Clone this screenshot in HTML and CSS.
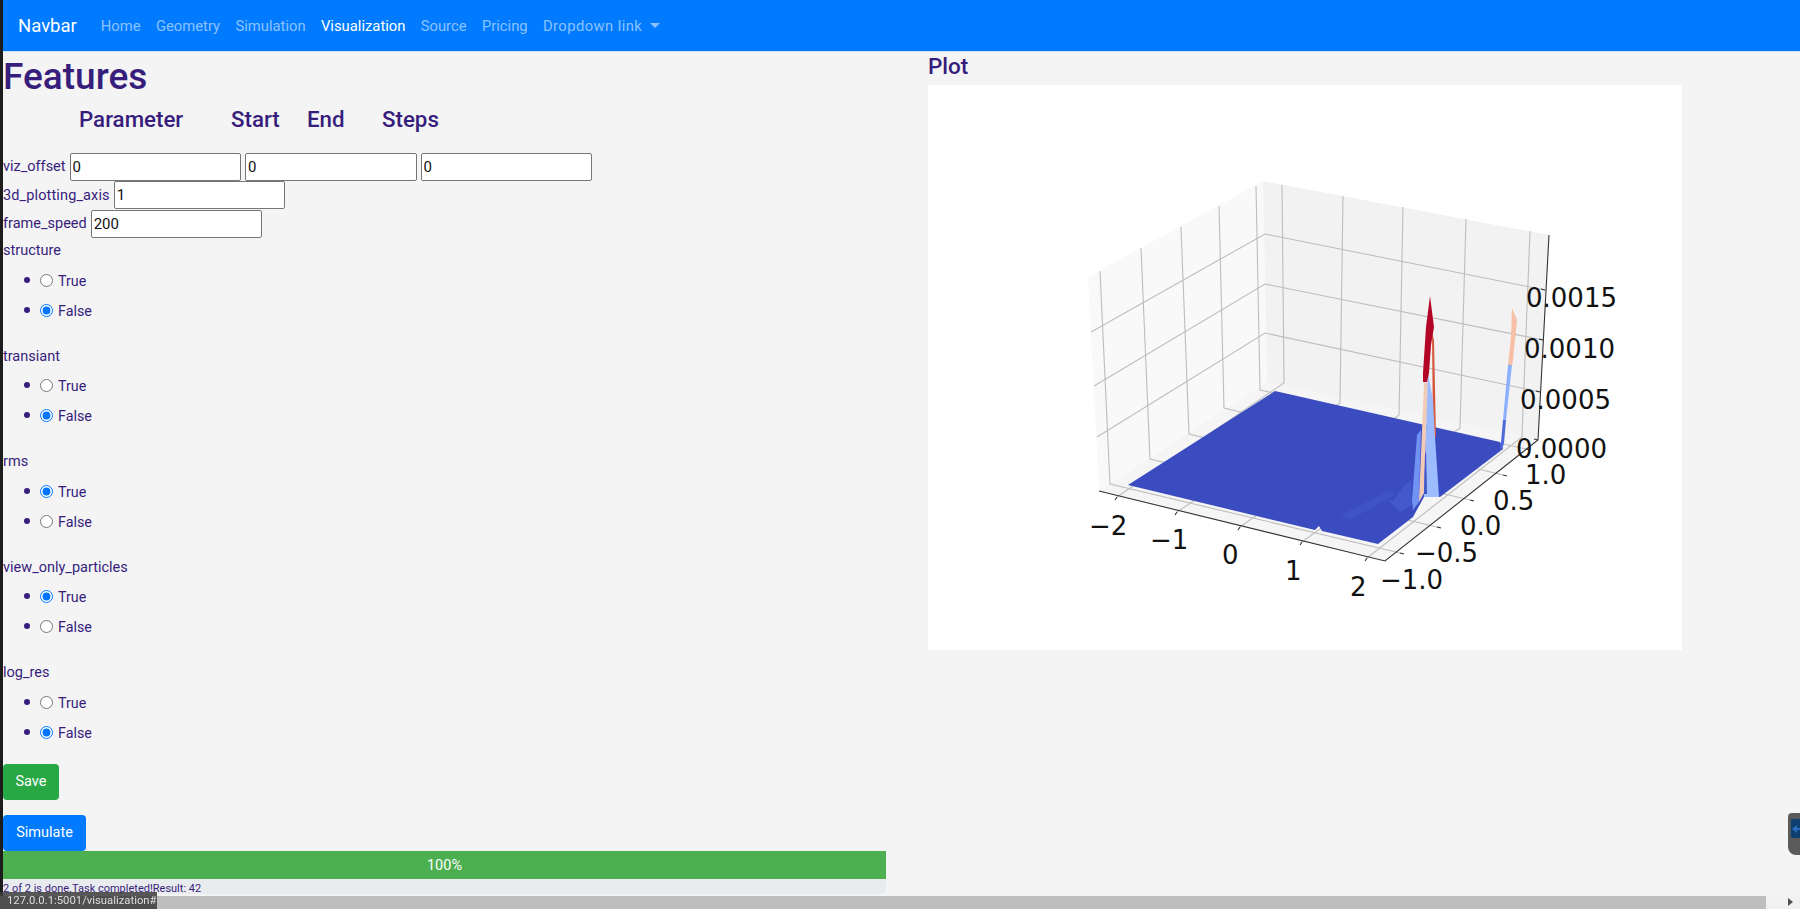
FILE: index.html
```html
<!DOCTYPE html>
<html lang="en">
<head>
  <meta charset="UTF-8" />
  <title>Visualization</title>
  <link rel="stylesheet" href="styles.css">
</head>
<body>
  <nav class="navbar">
    <a class="brand" href="#">Navbar</a>
    <a class="nav-link" href="#">Home</a>
    <a class="nav-link" href="#">Geometry</a>
    <a class="nav-link" href="#">Simulation</a>
    <a class="nav-link active" href="#">Visualization</a>
    <a class="nav-link" href="#">Source</a>
    <a class="nav-link" href="#">Pricing</a>
    <a class="nav-link nav-drop" href="#">Dropdown link <span class="caret"></span></a>
  </nav>

  <main class="content">
    <section class="features">
      <h1>Features</h1>
      <div class="heads">
        <h4 class="head-param">Parameter</h4>
        <h4 class="head-start">Start</h4>
        <h4 class="head-end">End</h4>
        <h4>Steps</h4>
      </div>

      <div class="field first"><label>viz_offset</label><input value="0"><input value="0"><input value="0"></div>
      <div class="field axis"><label>3d_plotting_axis</label><input value="1"></div>
      <div class="field"><label>frame_speed</label><input value="200"></div>

      <div class="group">
        <p>structure</p>
        <ul>
          <li><input type="radio" name="structure"><span>True</span></li>
          <li><input type="radio" name="structure" checked><span>False</span></li>
        </ul>
      </div>
      <div class="group">
        <p>transiant</p>
        <ul>
          <li><input type="radio" name="transiant"><span>True</span></li>
          <li><input type="radio" name="transiant" checked><span>False</span></li>
        </ul>
      </div>
      <div class="group">
        <p>rms</p>
        <ul>
          <li><input type="radio" name="rms" checked><span>True</span></li>
          <li><input type="radio" name="rms"><span>False</span></li>
        </ul>
      </div>
      <div class="group">
        <p>view_only_particles</p>
        <ul>
          <li><input type="radio" name="vop" checked><span>True</span></li>
          <li><input type="radio" name="vop"><span>False</span></li>
        </ul>
      </div>
      <div class="group">
        <p>log_res</p>
        <ul>
          <li><input type="radio" name="log_res"><span>True</span></li>
          <li><input type="radio" name="log_res" checked><span>False</span></li>
        </ul>
      </div>

      <button class="btn btn-save">Save</button>
      <button class="btn btn-sim">Simulate</button>
      <div class="progress">100%</div>
      <div class="status">2 of 2 is done.Task completed!Result: 42</div>
    </section>

    <section class="plot">
      <h4>Plot</h4>
      <div class="plot-box">
        <svg class="plot-svg" viewBox="928 85 754 565" width="754" height="565">
          <!-- panes -->
          <polygon points="1088,277 1263,181 1267,382 1099,491" fill="#f9f9f9"/>
          <polygon points="1263,181 1549,235 1538,440 1267,382" fill="#f2f2f2"/>
          <polygon points="1099,491 1267,382 1538,440 1385,561" fill="#f5f5f5"/>

          <!-- grid -->
          <g fill="none" stroke="#bdbdbd" stroke-width="1.1">
            <polyline points="1100,271 1110,484 1400,553"/>
            <polyline points="1141,248 1150,459 1437,527"/>
            <polyline points="1181,227 1189,434 1470,500"/>
            <polyline points="1219,206 1224,408 1503,475"/>
            <polyline points="1256,186 1260,390 1526,449"/>
            <polyline points="1282,185 1284,383 1117,497"/>
            <polyline points="1343,196 1340,403 1177,512"/>
            <polyline points="1403,207 1399,415 1240,527"/>
            <polyline points="1466,219 1460,428 1302,542"/>
            <polyline points="1530,231 1522,437 1367,558"/>
            <polyline points="1091,332 1265,234 1545,290"/>
            <polyline points="1094,386 1265,284 1543,340"/>
            <polyline points="1097,437 1265,333 1540,392"/>
          </g>

          <!-- surface -->
          <polygon points="1275,391 1500,442 1503,449 1440,497 1424,497 1413,517 1378,544 1322,531 1319,526 1315,530 1128,485" fill="#3a4cc0"/>
          <polygon points="1393,501 1403,487 1411,480 1412,505 1400,512 1388,500" fill="#4358cb"/>
          <polygon points="1340,515 1390,490 1395,495 1350,520" fill="#3f52c6"/>

          <!-- right peak -->
          <polygon points="1512,308 1517,320 1513,360 1512,365 1508,365 1511,337" fill="#f6bfa6"/>
          <polygon points="1508,365 1512,365 1506,420 1503,420" fill="#8db0fe"/>
          <polygon points="1503,420 1506,420 1504,443 1502,450 1500,448 1501,442" fill="#4f69d9"/>

          <!-- main peak -->
          <polygon points="1417,435 1421,430 1419,502 1413,510 1412,500" fill="#6f92f3"/>
          <polygon points="1424,383 1428,382 1424,493 1419,502" fill="#f2cbb7"/>
          <polygon points="1432,333 1434,340 1436,437 1433,437" fill="#d6553f"/>
          <polygon points="1428,373 1433,400 1435,437 1439,497 1424,497" fill="#9dbcff"/>
          <polygon points="1425,454 1426,452 1427,494 1424,494" fill="#3f53c5"/>
          <polygon points="1430,296 1434,327 1431,345 1429,373 1427,382 1423,382 1423,373 1426,327" fill="#b40426"/>

          <!-- axes -->
          <g fill="none" stroke="#333" stroke-width="1.1">
            <polyline points="1099,491 1385,561 1538,440 1549,235"/>
            <path d="M1117,497l-2,3M1177,512l-2,3M1240,527l-2,3M1302,542l-2,3M1367,558l-2,3"/>
            <path d="M1400,553l4,1M1437,527l4,1M1470,500l4,1M1503,475l4,1M1526,449l4,1"/>
            <path d="M1545,290l-4,-1M1543,340l-4,-1M1540,392l-4,-1M1538,440l-4,-1"/>
          </g>

          <!-- tick labels -->
          <g class="ticks">
            <text x="1526" y="307">0.0015</text>
            <text x="1524" y="358">0.0010</text>
            <text x="1520" y="409">0.0005</text>
            <text x="1516" y="458">0.0000</text>
            <text x="1525" y="484">1.0</text>
            <text x="1493" y="510">0.5</text>
            <text x="1460" y="535">0.0</text>
            <text x="1415" y="562">−0.5</text>
            <text x="1380" y="589">−1.0</text>
            <text x="1350" y="596">2</text>
            <text x="1285" y="580">1</text>
            <text x="1222" y="564">0</text>
            <text x="1150" y="549">−1</text>
            <text x="1089" y="535">−2</text>
          </g>
        </svg>
      </div>
    </section>
  </main>

  <div class="tv-tab"><span class="tv-icon"><svg viewBox="0 0 12 12" width="12" height="12"><path d="M1 6l5-4v3h6v2H6v3z" fill="#2a6ebb"/></svg></span></div>
  <div class="scrollbar"><div class="scroll-thumb"></div><span class="scroll-arrow"></span></div>
  <div class="url-bubble">127.0.0.1:5001/visualization#</div>
</body>
</html>
```

FILE: styles.css
```css
* { box-sizing: border-box; }

html, body { height: 100%; }

body {
  margin: 0; overflow: hidden;
  border-left: 3px solid #1c1c1c;
  background: #f4f4f4; color: #371d7c;
  font-family: Roboto, "Liberation Sans", sans-serif;
  font-size: 14.5px;
}

.navbar {
  display: flex; align-items: center;
  height: 52px; padding-left: 15px;
  background: #007bff;
  border-bottom: 1px solid #cfe3f7;
}
.navbar a { text-decoration: none; }
.brand { color: #fff; font-size: 18.5px; margin-right: 24px; }
.nav-link { color: rgba(255,255,255,.55); font-size: 14.8px; margin-right: 15.3px; }
.nav-link.active { color: #fff; }
.nav-drop { letter-spacing: .4px; }
.caret {
  display: inline-block; margin-left: 4px; vertical-align: 3px;
  border-top: 5px solid; border-left: 5px solid transparent; border-right: 5px solid transparent;
}

.content { display: grid; grid-template-columns: 925px 754px; }

h1 { margin: 2px 0 0; font-size: 37px; font-weight: 500; line-height: 46px; }
h4 { margin: 0; font-size: 22.3px; font-weight: 500; line-height: 28px; }

.heads { display: flex; padding-left: 76px; margin-top: 5px; }
.head-param { width: 152px; }
.head-start { width: 76px; }
.head-end { width: 75px; }

.field { display: flex; align-items: center; gap: 4px; height: 28.5px; }
.field.first { margin-top: 19.5px; }
.field.axis label { letter-spacing: .13px; }
.field input {
  width: 171.5px; height: 28px; padding: 1px 2px;
  border: 1px solid #767676; border-radius: 2px;
  background: #fff; color: #111;
  font: 15px Roboto, sans-serif;
}

.group { height: 105.6px; }
.field + .group { margin-top: 1px; }
.group p { margin: 0 0 1.5px; height: 24px; line-height: 24px; }
.group ul { margin: 0; padding-left: 40px; }
.group li { height: 30px; line-height: 30px; font-size: 14.3px; }
.group li::marker { font-size: 19px; }
.group li input { margin: 0 5px 0 -3px; vertical-align: -1px; }

.btn {
  display: block; border: 1px solid transparent; border-radius: 4px;
  color: #fff; font: 14.5px Roboto, sans-serif; height: 36px;
}
.btn-save { width: 56px; background: #28a745; margin-top: -3px; }
.btn-sim { width: 83px; background: #007bff; margin-top: 15px; }

.progress {
  width: 883px; height: 28px; line-height: 30px; text-align: center;
  background: #4caf50; color: #fff;
}
.status {
  width: 883px; height: 15px; line-height: 20px; border-radius: 0 0 4px 4px;
  background: #e9ecef; font-size: 11px; overflow: hidden;
}

.plot h4 { font-size: 22.5px; line-height: 28px; margin-bottom: 5px; }
.plot-box { width: 754px; height: 565px; background: #fff; }
.plot-svg { display: block; }
.ticks text { font: 26px "DejaVu Sans", sans-serif; fill: #111; }

.scrollbar {
  position: fixed; left: 0; right: 0; bottom: 0; height: 13px;
  background: #f1f1f1;
}
.scroll-thumb { position: absolute; left: 0; top: 0; bottom: 0; width: 1766px; background: #bebebe; }
.scroll-arrow {
  position: absolute; right: 7px; top: 2px;
  border-left: 5px solid #505050; border-top: 4px solid transparent; border-bottom: 4px solid transparent;
}

.url-bubble {
  position: fixed; left: 0; bottom: 0; width: 157px; height: 17px; line-height: 17px;
  padding-left: 7px; background: rgba(60,60,60,.85); color: #ddd; font-size: 11.3px; white-space: nowrap;
}

.tv-tab {
  position: fixed; right: 0; top: 813px; width: 12px; height: 42px;
  padding: 6px 0 0 3px; background: #5a5a5a; border-radius: 4px 0 0 8px;
}
.tv-icon { display: block; width: 12px; height: 19px; padding-top: 3px; background: #0e3f70; overflow: hidden; }
```
